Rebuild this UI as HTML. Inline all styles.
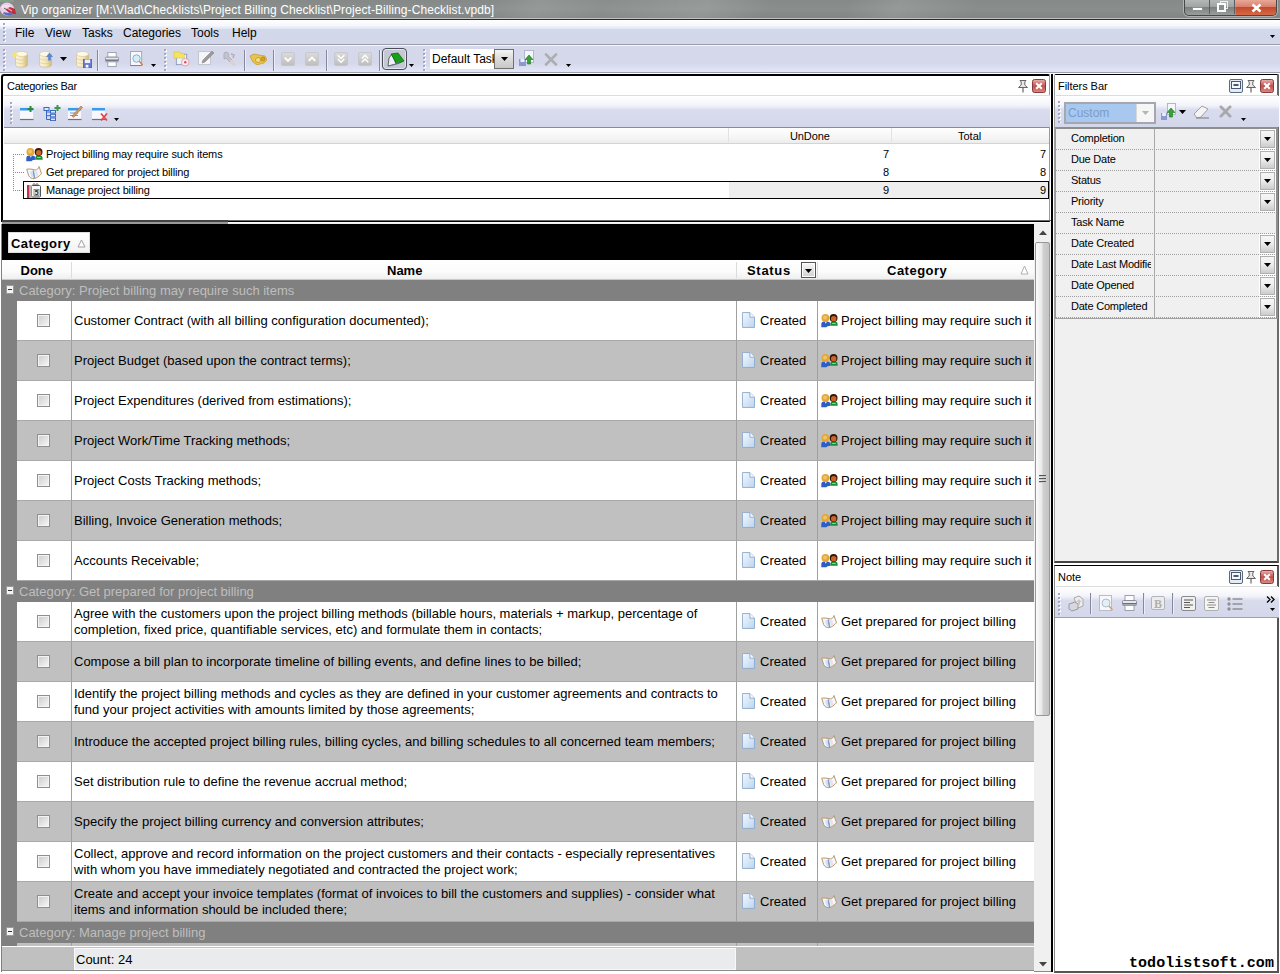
<!DOCTYPE html>
<html><head><meta charset="utf-8"><title>Vip organizer</title>
<style>
*{box-sizing:border-box;margin:0;padding:0}
html,body{width:1280px;height:974px;overflow:hidden;background:#fff}
body{font-family:"Liberation Sans",sans-serif;font-size:12px;color:#000;position:relative}
.a{position:absolute}
.t{position:absolute;white-space:nowrap;line-height:1}
b{font-weight:normal}
/* title */
#title{left:0;top:0;width:1280px;height:20px;background:linear-gradient(115deg,transparent 0,transparent 38%,rgba(255,255,255,.10) 42%,rgba(255,255,255,.03) 47%,rgba(255,255,255,.12) 55%,transparent 60%,transparent 66%,rgba(255,255,255,.10) 70%,transparent 76%) 0 0/1280px 18px no-repeat,linear-gradient(#858a88 0,#8a8f8d 9px,#818684 18px,#c0c2c1 18px,#c0c2c1 19px,#2a2c2b 19px)}
#title .t{color:#fff;font-size:12px;left:21px;top:4px;letter-spacing:.08px}
#wbtn{left:1184px;top:0;width:93px;height:16px;border:1px solid #454948;border-top:0;border-radius:0 0 5px 5px;background:linear-gradient(#b4b8b6,#a0a4a2 45%,#7c807e 50%,#9a9e9c);overflow:hidden;box-shadow:0 0 0 1px rgba(255,255,255,.35)}
#wclose{left:51px;top:0;width:41px;height:15px;background:linear-gradient(#e8a898,#d8806c 45%,#c44a2c 50%,#d46a48)}
.grip{position:absolute;width:3px;background:linear-gradient(#a4a8c0 0,#a4a8c0 2px,transparent 2px) 0 0/2px 4px repeat-y,linear-gradient(#fff 0,#fff 2px,transparent 2px) 1px 1px/2px 4px repeat-y}
.sep{position:absolute;top:4px;width:1px;height:21px;background:#858999;box-shadow:1px 0 0 #ecedf6}
/* menu */
#menu{left:0;top:20px;width:1280px;height:25px;background:linear-gradient(#fefeff 0,#f6f7fc 6px,#e8ecf8 7px,#e4e8f5 8.500px,#d2d9eb 9px,#d2d7ea 100%);border-bottom:1px solid #9a9cab}
#menu .t{font-size:12px;top:7px}
#tb{left:0;top:45px;width:1280px;height:29px;border-top:1px solid #f6f7fc;background:linear-gradient(#d5d9ea 0,#d4d8ea 60%,#e2e5f5 25px,#e2e5f5 26px,#9c9eac 26px,#9c9eac 27px,#fff 27px)}
/* categories bar */
#cat{left:1px;top:74px;width:1049px;height:148px;background:#fff;border:2px solid #000;border-right:1px solid #9a9a9a;border-radius:3px 2px 0 0}
.tbgrad{background:linear-gradient(#fff 0,#f3f4fa 30%,#d9dced 45%,#d3d7ea 100%)}
/* grid */
#gp{left:2px;top:224px;width:1032px;height:36px;background:#000}
#gh{left:2px;top:260px;width:1032px;height:20px;background:linear-gradient(#fff,#fbfbfb 60%,#efefef);border-bottom:1px solid #c9c9c9}
#gh .t{font-weight:bold;font-size:13px;top:4px}
.grp{left:2px;width:1032px;height:21px;background:#808080}
.grp .t{color:#bebebe;font-size:13px;left:17px;top:4px}
.grp i{position:absolute;left:4px;top:5px;width:8px;height:9px;background:#f4f4f4;border:1px solid #9a9a9a}
.grp i:after{content:"";position:absolute;left:1px;top:3px;width:4px;height:1px;background:#333}
.row{left:17px;width:1017px;height:40px;background:#fff;border-bottom:1px solid #a9a9a9}
.row.g{background:#c0c0c0}
.row .nm{position:absolute;left:57px;top:0;height:39px;width:660px;display:flex;align-items:center;font-size:13px;line-height:16px;white-space:nowrap}
.row .v1,.row .v2,.row .v3{position:absolute;top:0;width:1px;height:39px;background:#a0a0a0}
.row .v1{left:54px}.row .v2{left:719px}.row .v3{left:800px}
.row .cb{position:absolute;left:20px;top:13px;width:13px;height:13px;border:1px solid #8e8f8f;background:#f4f4f4}
.row .cb:after{content:"";position:absolute;left:1px;top:1px;right:1px;bottom:1px;background:linear-gradient(135deg,#cfcfcf,#f4f4f4)}
.row .st{position:absolute;left:743px;top:12px;font-size:13px;line-height:16px}
.row .ct{position:absolute;left:824px;top:12px;font-size:13px;line-height:16px;width:190px;overflow:hidden;white-space:nowrap}
.row svg.doc{position:absolute;left:725px;top:11px}
.row svg.ci{position:absolute;left:804px;top:12.500px}
#ind{left:1px;top:224px;width:16px;height:722px;background:#808080}
#ind:after{content:"";position:absolute;left:0;top:722px;width:1px;height:26px;background:#808080}
/* panel generic */
.ph{position:absolute;font-size:11px;white-space:nowrap;line-height:1}
.hline{position:absolute;height:1px;background:#d0d0d0}
/* cat tree */
#cat .th{position:absolute;left:1px;top:51px;width:1045px;height:17px;background:linear-gradient(#fff,#f4f4f4 70%,#ececec);border-bottom:1px solid #d4d4d4;border-top:1px solid #8c8c8c}
#cat .r{position:absolute;font-size:11px;white-space:nowrap;line-height:1;letter-spacing:-.15px}
#gp .cbox{position:absolute;left:6px;top:8px;width:82px;height:21px;background:linear-gradient(#fff,#f2f2f2);border:1px solid #ddd}
#gp .cbox .t{font-weight:bold;font-size:13px;left:2px;top:4px;letter-spacing:.4px}
#foot{left:2px;top:947px;width:1032px;height:24px;background:#c0c0c0;border-bottom:1px solid #8a8a8a}
#foot .lt{position:absolute;left:72px;top:1px;width:662px;height:22px;background:#e9ebec;border:1px solid #f8f8f8}
#foot .t{left:74px;top:6px;font-size:13px}
#sb{left:1034px;top:223px;width:17px;height:749px;background:#f0f0f0}
#sb .th{position:absolute;left:1px;top:19px;width:15px;height:474px;border:1px solid #989898;border-radius:2px;background:linear-gradient(90deg,#fbfbfb,#e9e9e9 45%,#cfcfcf 55%,#c4c4c4)}
#fp{left:1054px;top:74px;width:225px;height:489px;background:#f0f0f0;border:1px solid #a0a0a0;border-top:1px solid #000;border-right:2px solid #6a6a6a;border-bottom:2px solid #444;border-radius:2px 0 0 0}
#fp:before{content:"";position:absolute;left:0;top:0;width:222px;height:22px;background:#fff}
#fg{left:0;top:52px;width:223px;height:192px;border:2px solid #8e8e8e;border-left:1px solid #9a9a9a;border-right:2px solid #8e8e8e;border-bottom:1px solid #a0a0a0;background:#f0f0f0}
#fg .fl{position:absolute;left:0;width:95px;height:20px;padding-left:15px;font-size:11px;display:flex;align-items:center;overflow:hidden;white-space:nowrap;letter-spacing:-.22px}
#fg .dot{position:absolute;left:0;width:220px;height:1px;background:repeating-linear-gradient(90deg,#a0a0a0 0,#a0a0a0 1px,transparent 1px,transparent 2px)}
#fg .dd{position:absolute;left:203px;width:17px;height:20px;border:1px solid #fff;background:linear-gradient(#f8f8f8,#eee 45%,#c8c8c8);box-shadow:inset 0 0 0 1px #b0b0b0}
#np{left:1054px;top:565px;width:225px;height:408px;background:#fff;border-top:1px solid #000;border-left:1px solid #888;border-right:2px solid #555;border-bottom:2px solid #555}

</style></head><body>
<svg width="0" height="0" style="position:absolute"><defs>
<linearGradient id="gCyl" x1="0" x2="1"><stop offset="0" stop-color="#fbf5de"/><stop offset=".55" stop-color="#f3e6b8"/><stop offset="1" stop-color="#cfb677"/></linearGradient>
<linearGradient id="gBtn" x1="0" x2="0" y1="0" y2="1"><stop offset="0" stop-color="#dcdcdc"/><stop offset="1" stop-color="#bdbdbd"/></linearGradient>
<linearGradient id="gDoc" x1="0" x2="1" y1="0" y2="1"><stop offset="0" stop-color="#f4f9ff"/><stop offset="1" stop-color="#bcd4ee"/></linearGradient>
<linearGradient id="gClose" x1="0" x2="0" y1="0" y2="1"><stop offset="0" stop-color="#e8b4b0"/><stop offset=".5" stop-color="#c0504d"/><stop offset="1" stop-color="#d98a86"/></linearGradient>
<linearGradient id="gDD" x1="0" x2="0" y1="0" y2="1"><stop offset="0" stop-color="#f6f6f6"/><stop offset="1" stop-color="#c4c4c4"/></linearGradient>
<symbol id="i-doc" viewBox="0 0 14 17"><path d="M.5 .5h8l5 5v11h-13z" fill="url(#gDoc)" stroke="#8eaacc"/><path d="M8.500 .5v5h5" fill="#f7fbff" stroke="#8eaacc"/></symbol>
<symbol id="i-ppl" viewBox="0 0 17 14"><path d="M.3 13.300v-3.200c0-1.800 1.500-2.600 3-2.600h2.800c1.700 0 3.200.8 3.200 2.600v1.700l-2.800.4-1.200 1.100z" fill="#2d5ec6"/><path d="M3.600 7.500l1.200 2.300 1.200-2.300z" fill="#e8eefc"/><path d="M9.300 11.800v-2c0-1.600 1.400-2.300 2.700-2.300h1.600c1.500 0 3 .7 3 2.300v2z" fill="#1f8c3c"/><path d="M11.200 9.500h3.400" stroke="#8fd8a0" stroke-width="1"/><circle cx="4.400" cy="4" r="3.900" fill="#e2a63a"/><circle cx="4" cy="3.400" r="2" fill="#f0c462"/><circle cx="12.600" cy="4" r="3.900" fill="#33170a"/><circle cx="12.700" cy="4.700" r="2.700" fill="#cc6428"/></symbol>
<symbol id="i-book" viewBox="0 0 17 14"><path d="M.7 3.200l2 6.500c1 2 3 3 5.300 3 3-.7 5.500-2.700 7.500-5l-2.500-7.200c-.5 2-1.700 3.200-3.800 3.500c-3-.9-5.500-1.200-8.500-.8z" fill="#f4f7fc" stroke="#b9966c" stroke-width="1"/><path d="M7.200 4.500l1.300 7.700" stroke="#7f9cc8" stroke-width="1.600"/><path d="M4 5.500l1.500 5.500 2 .8-1-6.500z" fill="#cfe0f4"/><path d="M9 5l1 6.500 2.500-1.800-1.500-5z" fill="#e8e0ea"/></symbol>
<symbol id="i-clip" viewBox="0 0 14 15"><rect x="4.500" y="2.500" width="9" height="11.500" rx="1" fill="#fafafa" stroke="#555"/><rect x="0" y="2" width="2.600" height="13" fill="#c8304a"/><rect x="2.600" y="2" width="2" height="13" fill="#b9b9b9"/><path d="M6 2.500c0-2.500 2-2.500 2 0M9 2.500c0-2.500 2-2.500 2 0" fill="none" stroke="#444" stroke-width=".9"/><rect x="7" y="6.500" width="5" height="6" fill="#fff" stroke="#666" stroke-width=".7"/><text x="7.800" y="12" font-family="Liberation Sans" font-size="6.500" font-weight="bold" fill="#222">5</text></symbol>
<symbol id="i-close" viewBox="0 0 14 14"><rect x=".5" y=".5" width="13" height="13" rx="2" fill="url(#gClose)" stroke="#8c3a38"/><path d="M4.200 4.200l5.600 5.600M9.800 4.200l-5.600 5.600" stroke="#fff" stroke-width="2"/></symbol>
<symbol id="i-pin" viewBox="0 0 12 13"><path d="M3 .5h6l-1.200 1.500v3l2.700 2.500h-9l2.700-2.500v-3z" fill="#e8e8e8" stroke="#666" stroke-width="1"/><path d="M6 7.500v5" stroke="#666" stroke-width="1.200"/></symbol>
<symbol id="i-rest" viewBox="0 0 14 14"><rect x=".5" y=".5" width="13" height="13" rx="1.500" fill="#e4ecf6" stroke="#5a6a80"/><rect x="2.500" y="2.500" width="9" height="7" fill="#f4f8fc" stroke="#4a5870"/><rect x="4.500" y="5" width="5" height="2" fill="#4a5870"/></symbol>
<symbol id="i-cyl" viewBox="0 0 13 17"><path d="M.5 3v11c0 3 12 3 12 0v-11z" fill="url(#gCyl)" stroke="#cdb987" stroke-width=".6"/><ellipse cx="6.500" cy="3" rx="6" ry="2.500" fill="#fdf9e8" stroke="#d8c594" stroke-width=".6"/><path d="M.5 7c0 2.800 12 2.800 12 0M.5 10.500c0 2.800 12 2.800 12 0" fill="none" stroke="#dccb98" stroke-width=".7"/></symbol>
<symbol id="i-dn" viewBox="0 0 7 4"><path d="M0 0h7l-3.500 4z" fill="#000"/></symbol>
<symbol id="i-gbtn" viewBox="0 0 16 16"><rect x=".5" y=".5" width="15" height="15" rx="2" fill="url(#gBtn)" stroke="#c4c4c8"/></symbol>
</defs></svg>

<div id="title" class="a">
<span class="a" style="left:0;top:0;width:14px;height:2px;background:linear-gradient(90deg,#7aa888,#8a9a90)"></span><svg class="a" style="left:0;top:2px" width="17" height="15" viewBox="0 0 17 15"><ellipse cx="7" cy="7" rx="7" ry="6.500" fill="#e9cfe6"/><path d="M1 5c3-3 8-3 10 0l-6 3z" fill="#f3dff1"/><path d="M6 7l4-2 5 2 1 5-5 0-4-3z" fill="#c8283a"/><path d="M7 6l5 3" stroke="#f0b8b0" stroke-width="1.200"/><path d="M3 11.500c3 2.500 7 2.500 10 .5l-1-2c-3 1-6 1-8 0z" fill="#5f6cc4"/><path d="M4 6l3 2" stroke="#555" stroke-width="1"/></svg>
<div class="t">Vip organizer [M:\Vlad\Checklists\Project Billing Checklist\Project-Billing-Checklist.vpdb]</div>
<div id="wbtn" class="a">
<span class="a" style="left:0;top:0;width:25px;height:14px;border-right:1px solid #5a5e5c"><span class="a" style="left:7px;top:7px;width:11px;height:4px;background:#fff;border:1px solid #8a8e8c;border-radius:1px"></span></span>
<span class="a" style="left:26px;top:0;width:24px;height:14px;border-right:1px solid #5a5e5c"><span class="a" style="left:9px;top:1px;width:8px;height:8px;border:1px solid #fff;opacity:.8"></span><span class="a" style="left:6px;top:3px;width:9px;height:9px;border:2px solid #fff;background:#8a8e8c"></span></span>
<span class="a" id="wclose"><svg class="a" style="left:15px;top:3px" width="11" height="10" viewBox="0 0 11 10"><path d="M1.500 1.500l8 7M9.500 1.500l-8 7" stroke="#fff" stroke-width="2.600"/></svg></span>
</div>
</div>
<div id="menu" class="a">
<i class="grip" style="left:3px;top:3px;height:20px"></i>
<div class="t" style="left:15px">File</div>
<div class="t" style="left:45px">View</div>
<div class="t" style="left:82px">Tasks</div>
<div class="t" style="left:123px">Categories</div>
<div class="t" style="left:191px">Tools</div>
<div class="t" style="left:232px">Help</div>
<svg class="a" style="left:1270px;top:15px" width="5" height="3"><use href="#i-dn"/></svg>
</div>
<div id="tb" class="a">
<i class="grip" style="left:3px;top:3px;height:22px"></i>
<svg class="a" style="left:15px;top:5px" width="13" height="17"><use href="#i-cyl"/></svg>
<svg class="a" style="left:11px;top:5px" width="8" height="8" viewBox="0 0 8 8"><path d="M4 0l1 3 3 1-3 1-1 3-1-3-3-1 3-1z" fill="#f8e860"/></svg>
<svg class="a" style="left:39px;top:5px" width="13" height="17"><use href="#i-cyl"/></svg>
<svg class="a" style="left:46px;top:6px" width="7" height="9" viewBox="0 0 8 9"><path d="M4 0l4 5h-2.500v4h-3v-4h-2.500z" fill="#5a86d4"/></svg>
<svg class="a" style="left:60px;top:11px" width="7" height="4"><use href="#i-dn"/></svg>
<svg class="a" style="left:76px;top:5px" width="13" height="17"><use href="#i-cyl"/></svg>
<svg class="a" style="left:83px;top:13px" width="9" height="9" viewBox="0 0 10 10"><rect x=".5" y=".5" width="9" height="9" fill="#6a78c8" stroke="#5a66b0"/><rect x="2" y=".5" width="6" height="4" fill="#eef"/><rect x="3" y="6.500" width="3" height="3" fill="#fff"/></svg>
<b class="sep" style="left:97px"></b>
<svg class="a" style="left:105px;top:6px" width="14" height="15" viewBox="0 0 15 16"><rect x="3" y=".5" width="9" height="5" fill="#fff" stroke="#9aa0b0"/><rect x=".5" y="5.500" width="14" height="5" rx="1" fill="#e8e8ec" stroke="#8a8e9c"/><rect x="1" y="8" width="13" height="1.500" fill="#6a6e7c"/><rect x="3" y="10.500" width="9" height="5" fill="#fff" stroke="#9aa0b0"/></svg>
<svg class="a" style="left:130px;top:5px" width="14" height="16" viewBox="0 0 15 17"><rect x=".5" y=".5" width="12" height="15" fill="#f8f8fc" stroke="#a0a4b4"/><circle cx="7" cy="8" r="4" fill="#d4ecf6" stroke="#7ab0d0"/><path d="M10 11l3.500 4" stroke="#d08050" stroke-width="1.600"/><path d="M.5 15.500h12" stroke="#7a8090"/></svg>
<svg class="a" style="left:151px;top:18px" width="5" height="3"><use href="#i-dn"/></svg>
<i class="grip" style="left:164px;top:3px;height:22px"></i>
<svg class="a" style="left:173px;top:5px" width="17" height="16" viewBox="0 0 18 17"><rect x="3.500" y="3.500" width="11" height="11" fill="#eef2fa" stroke="#8a9ac0"/><path d="M1 1h6l1 1.500h4v5h-11z" fill="#f6e45a" stroke="#d8c040" stroke-width=".6"/><circle cx="13" cy="12" r="4" fill="#fbeef0" stroke="#e0a0a8"/><circle cx="13" cy="12" r="1.300" fill="#d05060"/></svg>
<svg class="a" style="left:198px;top:4px" width="17" height="16" viewBox="0 0 17 16"><rect x=".5" y="1.500" width="12" height="13" fill="#f6f6f8" stroke="#c4c6d0"/><path d="M4 13l1-3 9-9 2 2-9 9z" fill="#9a9a9e" stroke="#88888c" stroke-width=".6"/></svg>
<svg class="a" style="left:222px;top:5px" width="16" height="16" viewBox="0 0 16 16"><path d="M2 2l3-1 2 2-1 2 6 6 1 3-3-1-6-6-2 1z" fill="#c4c4cc" stroke="#a8a8b4" stroke-width=".8"/><path d="M9 3l3 1-1 3" fill="none" stroke="#b0b0bc" stroke-width="1.500"/><rect x="8" y="9" width="6" height="6" rx="1" fill="#e0d8dc" opacity=".8"/></svg>
<b class="sep" style="left:244px"></b>
<svg class="a" style="left:249px;top:7px" width="18" height="12" viewBox="0 0 18 12"><path d="M1 3l4-2 5 1 6 1 2 4-3 3-4 1-3 1-4-3z" fill="#e8c44a" stroke="#c49a28" stroke-width=".7"/><circle cx="9" cy="7" r="2.500" fill="#f6e08a" stroke="#b88c20" stroke-width=".7"/><circle cx="14" cy="6" r="2" fill="#d4a830" stroke="#a87c18" stroke-width=".7"/></svg>
<b class="sep" style="left:273px"></b>
<svg class="a" style="left:281px;top:6px" width="14" height="14"><use href="#i-gbtn"/></svg>
<svg class="a" style="left:281px;top:6px" width="14" height="14" viewBox="0 0 15 15"><path d="M4 6l3.500 3.500 3.500-3.500" fill="none" stroke="#fff" stroke-width="2"/></svg>
<svg class="a" style="left:305px;top:6px" width="14" height="14"><use href="#i-gbtn"/></svg>
<svg class="a" style="left:305px;top:6px" width="14" height="14" viewBox="0 0 15 15"><path d="M4 9.500l3.500-3.500 3.500 3.500" fill="none" stroke="#fff" stroke-width="2"/></svg>
<b class="sep" style="left:326px"></b>
<svg class="a" style="left:334px;top:6px" width="14" height="14"><use href="#i-gbtn"/></svg>
<svg class="a" style="left:334px;top:6px" width="14" height="14" viewBox="0 0 15 15"><path d="M4 3.500l3.500 3.500 3.500-3.500M4 7.500l3.500 3.500 3.500-3.500" fill="none" stroke="#fff" stroke-width="1.600"/></svg>
<svg class="a" style="left:358px;top:6px" width="14" height="14"><use href="#i-gbtn"/></svg>
<svg class="a" style="left:358px;top:6px" width="14" height="14" viewBox="0 0 15 15"><path d="M4 7l3.500-3.500 3.500 3.500M4 11l3.500-3.500 3.500 3.500" fill="none" stroke="#fff" stroke-width="1.600"/></svg>
<b class="sep" style="left:379px"></b>
<span class="a" style="left:382px;top:2px;width:25px;height:22px;border:1px solid #4a4e5c;border-radius:4px;background:#c6c8d6;box-shadow:inset 0 0 0 1px #e4e6f0"></span>
<svg class="a" style="left:386px;top:6px" width="19" height="16" viewBox="0 0 19 16"><path d="M2 14l1-8 3-4 4 10z" fill="#eef" stroke="#3a4a3a" stroke-width=".8"/><path d="M5 2l7-1 6 8-7 3z" fill="#18a018" stroke="#0a6a0a" stroke-width=".8"/><path d="M3 14l8-2 2-2" fill="none" stroke="#6a7aa0" stroke-width=".8"/></svg>
<svg class="a" style="left:409px;top:18px" width="5" height="3"><use href="#i-dn"/></svg>
<i class="grip" style="left:423px;top:3px;height:22px"></i>
<span class="a" style="left:430px;top:3px;width:64px;height:20px;background:#fff;overflow:hidden"><span class="t" style="left:2px;top:4px;font-size:12px">Default Task</span></span>
<span class="a" style="left:494px;top:3px;width:20px;height:20px;border:1px solid #707070;background:linear-gradient(#f4f4f4,#ddd 45%,#c8c8c8)"><svg class="a" style="left:6px;top:7px" width="7" height="4"><use href="#i-dn"/></svg></span>
<svg class="a" style="left:518px;top:4px" width="18" height="18" viewBox="0 0 18 18"><rect x="6.500" y=".5" width="9" height="12" fill="#f4f6fc" stroke="#b0b8d0"/><path d="M1 9h7v7h-7z" fill="#8a9ad0"/><rect x="2.500" y="9" width="4" height="3" fill="#eef"/><path d="M11 5l4 4.500h-2.500v4.500h-3v-4.500h-2.500z" fill="#3aa03a" stroke="#1a7a1a" stroke-width=".6"/></svg>
<svg class="a" style="left:544px;top:7px" width="14" height="13" viewBox="0 0 14 13"><path d="M2 1.500l10 10M12 1.500l-10 10" stroke="#aeaeb2" stroke-width="2.600" stroke-linecap="round"/></svg>
<svg class="a" style="left:566px;top:18px" width="5" height="3"><use href="#i-dn"/></svg>
</div>

<div id="ind" class="a"></div>
<div id="cat" class="a">
<div class="ph" style="left:4px;top:5px;letter-spacing:-.25px">Categories Bar</div>
<svg class="a" style="left:1014px;top:4px" width="12" height="13"><use href="#i-pin"/></svg>
<svg class="a" style="left:1029px;top:3px" width="14" height="14"><use href="#i-close"/></svg>
<div class="hline" style="left:1px;top:19px;width:1046px;background:#dcdcdc"></div>
<div class="a tbgrad" style="left:1px;top:20px;width:1046px;height:31px">
<i class="grip" style="left:6px;top:6px;height:22px"></i>
<svg class="a" style="left:15px;top:9px" width="16" height="16" viewBox="0 0 16 16"><rect x="1" y="3" width="13" height="11" fill="#f8f8fc"/><rect x="1" y="3" width="13" height="2.500" fill="#3a9aea"/><path d="M1 14.500h13.500" stroke="#6a7080" stroke-width="1.200"/><path d="M11.500 1v6M8.500 4h6" stroke="#2a8a3a" stroke-width="2"/></svg>
<svg class="a" style="left:39px;top:9px" width="18" height="16" viewBox="0 0 18 16"><path d="M3.500 5v9.500h4M3.500 7h4M3.500 10.700h4" fill="none" stroke="#3a6ac0"/><rect x="1" y="2.500" width="5" height="3" fill="#dce8fa" stroke="#3a6ac0"/><rect x="7.500" y="5.500" width="5" height="2.600" fill="#dce8fa" stroke="#3a6ac0"/><rect x="7.500" y="9.300" width="5" height="2.600" fill="#dce8fa" stroke="#3a6ac0"/><rect x="7.500" y="13" width="5" height="2.600" fill="#dce8fa" stroke="#3a6ac0"/><path d="M14.500 0v6M11.500 3h6" stroke="#3a9a4a" stroke-width="2"/></svg>
<svg class="a" style="left:63px;top:8px" width="17" height="17" viewBox="0 0 17 17"><rect x="1" y="4" width="13" height="11" fill="#f8f8fc"/><rect x="1" y="4" width="13" height="2.500" fill="#3a9aea"/><path d="M1 15.500h13.500" stroke="#6a7080" stroke-width="1.200"/><path d="M3 9h8M3 11.500h8" stroke="#5a8ad0" stroke-width=".9"/><path d="M5 12l9-10 1.500 1.500-9 10z" fill="#d89a5a" stroke="#a86a3a" stroke-width=".6"/></svg>
<svg class="a" style="left:87px;top:9px" width="18" height="17" viewBox="0 0 18 17"><rect x="1" y="3" width="13" height="11" fill="#f8f8fc"/><rect x="1" y="3" width="13" height="2.500" fill="#3a9aea"/><path d="M1 14.500h13.500" stroke="#6a7080" stroke-width="1.200"/><path d="M10 8.500l6 7M16 8.500l-6 7" stroke="#e0484a" stroke-width="1.800"/></svg>
<svg class="a" style="left:110px;top:22px" width="5" height="3"><use href="#i-dn"/></svg>
</div>
<div class="th"><b class="a" style="left:724px;top:0;width:1px;height:14px;background:#e2e2e2"></b><b class="a" style="left:887px;top:0;width:1px;height:14px;background:#e2e2e2"></b>
<span class="ph" style="left:786px;top:3px;letter-spacing:-.1px">UnDone</span><span class="ph" style="left:954px;top:3px">Total</span></div>
<!-- tree lines -->
<b class="a" style="left:10px;top:78px;width:1px;height:37px;background:repeating-linear-gradient(#8a8a8a 0,#8a8a8a 1px,transparent 1px,transparent 2px)"></b>
<b class="a" style="left:10px;top:78px;width:11px;height:1px;background:repeating-linear-gradient(90deg,#8a8a8a 0,#8a8a8a 1px,transparent 1px,transparent 2px)"></b>
<b class="a" style="left:10px;top:96px;width:11px;height:1px;background:repeating-linear-gradient(90deg,#8a8a8a 0,#8a8a8a 1px,transparent 1px,transparent 2px)"></b>
<b class="a" style="left:10px;top:114px;width:11px;height:1px;background:repeating-linear-gradient(90deg,#8a8a8a 0,#8a8a8a 1px,transparent 1px,transparent 2px)"></b>
<svg class="a" style="left:23px;top:72px" width="17" height="14"><use href="#i-ppl"/></svg>
<span class="r" style="left:43px;top:73px">Project billing may require such items</span>
<svg class="a" style="left:23px;top:89.500px" width="17" height="14"><use href="#i-book"/></svg>
<span class="r" style="left:43px;top:91px">Get prepared for project billing</span>
<div class="a" style="left:20px;top:105px;width:1026px;height:18px;border:1px solid #000"><b class="a" style="left:705px;top:0;width:319px;height:16px;background:#eee"></b></div>
<svg class="a" style="left:24px;top:106.500px" width="14" height="15"><use href="#i-clip"/></svg>
<span class="r" style="left:43px;top:109px">Manage project billing</span>
<span class="r" style="right:160px;top:73px">7</span><span class="r" style="right:3px;top:73px">7</span>
<span class="r" style="right:160px;top:91px">8</span><span class="r" style="right:3px;top:91px">8</span>
<span class="r" style="right:160px;top:109px">9</span><span class="r" style="right:3px;top:109px">9</span>
</div>
<div class="a" style="left:2px;top:220px;width:226px;height:2px;background:#444"></div><div class="a" style="left:2px;top:222px;width:226px;height:2px;background:#9a9a9a"></div><div class="a" style="left:228px;top:220px;width:823px;height:1px;background:#6a6a6a"></div><div class="a" style="left:228px;top:222px;width:823px;height:2px;background:linear-gradient(#fff,#e8e8e8)"></div>
<div id="gp" class="a"><div class="cbox"><div class="t">Category</div><svg class="a" style="left:68px;top:6px" width="9" height="9" viewBox="0 0 9 9"><path d="M4.500 1l3.500 7h-7z" fill="#fff" stroke="#a0a0a0"/></svg></div></div>
<div id="gh" class="a">
<b class="a" style="left:69px;top:2px;width:1px;height:16px;background:#dcdcdc"></b>
<b class="a" style="left:734px;top:2px;width:1px;height:16px;background:#dcdcdc"></b>
<b class="a" style="left:815px;top:2px;width:1px;height:16px;background:#dcdcdc"></b>
<div class="t" style="left:18.500px">Done</div>
<div class="t" style="left:385px">Name</div>
<div class="t" style="left:745px;letter-spacing:.7px">Status</div>
<span class="a" style="left:799px;top:2px;width:15px;height:16px;border:1px solid #555;background:linear-gradient(#f8f8f8,#d0d0d0);box-shadow:inset 0 0 0 1px #fff"><svg class="a" style="left:3px;top:6px" width="7" height="4"><use href="#i-dn"/></svg></span>
<div class="t" style="left:885px;letter-spacing:.5px">Category</div>
<svg class="a" style="left:1018px;top:5px" width="9" height="10" viewBox="0 0 9 10"><path d="M4.500 1l3.500 8h-7z" fill="#fff" stroke="#b0b0b0"/></svg>
</div>
<div id="foot" class="a"><div class="lt"></div><div class="t">Count: 24</div></div>
<div id="sb" class="a"><svg class="a" style="left:5px;top:7px" width="8" height="5" viewBox="0 0 8 5"><path d="M0 5l4-4.500 4 4.500z" fill="#444"/></svg><div class="th"></div>
<b class="a" style="left:5px;top:252px;width:7px;height:1px;background:#555;box-shadow:0 3px 0 #555,0 6px 0 #555,0 1px 0 #ccc,0 4px 0 #ccc,0 7px 0 #ccc"></b>
<svg class="a" style="left:5px;top:739px" width="8" height="5" viewBox="0 0 8 5"><path d="M0 0h8l-4 4.500z" fill="#444"/></svg></div>
<div class="a" style="left:1034px;top:971px;width:17px;height:1px;background:#8a8a8a"></div>
<div class="a" style="left:1051px;top:74px;width:2px;height:898px;background:#000"></div>

<div class="a grp" style="top:280px"><i></i><div class="t">Category: Project billing may require such items</div></div>
<div class="a row" style="top:301px"><b class="v1"></b><b class="v2"></b><b class="v3"></b><span class="cb"></span><div class="nm"><span>Customer Contract (with all billing configuration documented);</span></div><svg class="doc" width="13" height="16"><use href="#i-doc"/></svg><span class="st">Created</span><svg class="ci" width="17" height="14"><use href="#i-ppl"/></svg><span class="ct">Project billing may require such items</span></div>
<div class="a row g" style="top:341px"><b class="v1"></b><b class="v2"></b><b class="v3"></b><span class="cb"></span><div class="nm"><span>Project Budget (based upon the contract terms);</span></div><svg class="doc" width="13" height="16"><use href="#i-doc"/></svg><span class="st">Created</span><svg class="ci" width="17" height="14"><use href="#i-ppl"/></svg><span class="ct">Project billing may require such items</span></div>
<div class="a row" style="top:381px"><b class="v1"></b><b class="v2"></b><b class="v3"></b><span class="cb"></span><div class="nm"><span>Project Expenditures (derived from estimations);</span></div><svg class="doc" width="13" height="16"><use href="#i-doc"/></svg><span class="st">Created</span><svg class="ci" width="17" height="14"><use href="#i-ppl"/></svg><span class="ct">Project billing may require such items</span></div>
<div class="a row g" style="top:421px"><b class="v1"></b><b class="v2"></b><b class="v3"></b><span class="cb"></span><div class="nm"><span>Project Work/Time Tracking methods;</span></div><svg class="doc" width="13" height="16"><use href="#i-doc"/></svg><span class="st">Created</span><svg class="ci" width="17" height="14"><use href="#i-ppl"/></svg><span class="ct">Project billing may require such items</span></div>
<div class="a row" style="top:461px"><b class="v1"></b><b class="v2"></b><b class="v3"></b><span class="cb"></span><div class="nm"><span>Project Costs Tracking methods;</span></div><svg class="doc" width="13" height="16"><use href="#i-doc"/></svg><span class="st">Created</span><svg class="ci" width="17" height="14"><use href="#i-ppl"/></svg><span class="ct">Project billing may require such items</span></div>
<div class="a row g" style="top:501px"><b class="v1"></b><b class="v2"></b><b class="v3"></b><span class="cb"></span><div class="nm"><span>Billing, Invoice Generation methods;</span></div><svg class="doc" width="13" height="16"><use href="#i-doc"/></svg><span class="st">Created</span><svg class="ci" width="17" height="14"><use href="#i-ppl"/></svg><span class="ct">Project billing may require such items</span></div>
<div class="a row" style="top:541px"><b class="v1"></b><b class="v2"></b><b class="v3"></b><span class="cb"></span><div class="nm"><span>Accounts Receivable;</span></div><svg class="doc" width="13" height="16"><use href="#i-doc"/></svg><span class="st">Created</span><svg class="ci" width="17" height="14"><use href="#i-ppl"/></svg><span class="ct">Project billing may require such items</span></div>
<div class="a grp" style="top:581px"><i></i><div class="t">Category: Get prepared for project billing</div></div>
<div class="a row" style="top:602px"><b class="v1"></b><b class="v2"></b><b class="v3"></b><span class="cb"></span><div class="nm"><span>Agree with the customers upon the project billing methods (billable hours, materials + markup, percentage of<br>completion, fixed price, quantifiable services, etc) and formulate them in contacts;</span></div><svg class="doc" width="13" height="16"><use href="#i-doc"/></svg><span class="st">Created</span><svg class="ci" width="17" height="14"><use href="#i-book"/></svg><span class="ct">Get prepared for project billing</span></div>
<div class="a row g" style="top:642px"><b class="v1"></b><b class="v2"></b><b class="v3"></b><span class="cb"></span><div class="nm"><span>Compose a bill plan to incorporate timeline of billing events, and define lines to be billed;</span></div><svg class="doc" width="13" height="16"><use href="#i-doc"/></svg><span class="st">Created</span><svg class="ci" width="17" height="14"><use href="#i-book"/></svg><span class="ct">Get prepared for project billing</span></div>
<div class="a row" style="top:682px"><b class="v1"></b><b class="v2"></b><b class="v3"></b><span class="cb"></span><div class="nm"><span>Identify the project billing methods and cycles as they are defined in your customer agreements and contracts to<br>fund your project activities with amounts limited by those agreements;</span></div><svg class="doc" width="13" height="16"><use href="#i-doc"/></svg><span class="st">Created</span><svg class="ci" width="17" height="14"><use href="#i-book"/></svg><span class="ct">Get prepared for project billing</span></div>
<div class="a row g" style="top:722px"><b class="v1"></b><b class="v2"></b><b class="v3"></b><span class="cb"></span><div class="nm"><span>Introduce the accepted project billing rules, billing cycles, and billing schedules to all concerned team members;</span></div><svg class="doc" width="13" height="16"><use href="#i-doc"/></svg><span class="st">Created</span><svg class="ci" width="17" height="14"><use href="#i-book"/></svg><span class="ct">Get prepared for project billing</span></div>
<div class="a row" style="top:762px"><b class="v1"></b><b class="v2"></b><b class="v3"></b><span class="cb"></span><div class="nm"><span>Set distribution rule to define the revenue accrual method;</span></div><svg class="doc" width="13" height="16"><use href="#i-doc"/></svg><span class="st">Created</span><svg class="ci" width="17" height="14"><use href="#i-book"/></svg><span class="ct">Get prepared for project billing</span></div>
<div class="a row g" style="top:802px"><b class="v1"></b><b class="v2"></b><b class="v3"></b><span class="cb"></span><div class="nm"><span>Specify the project billing currency and conversion attributes;</span></div><svg class="doc" width="13" height="16"><use href="#i-doc"/></svg><span class="st">Created</span><svg class="ci" width="17" height="14"><use href="#i-book"/></svg><span class="ct">Get prepared for project billing</span></div>
<div class="a row" style="top:842px"><b class="v1"></b><b class="v2"></b><b class="v3"></b><span class="cb"></span><div class="nm"><span>Collect, approve and record information on the project customers and their contacts - especially representatives<br>with whom you have immediately negotiated and contracted the project work;</span></div><svg class="doc" width="13" height="16"><use href="#i-doc"/></svg><span class="st">Created</span><svg class="ci" width="17" height="14"><use href="#i-book"/></svg><span class="ct">Get prepared for project billing</span></div>
<div class="a row g" style="top:882px"><b class="v1"></b><b class="v2"></b><b class="v3"></b><span class="cb"></span><div class="nm"><span>Create and accept your invoice templates (format of invoices to bill the customers and supplies) - consider what<br>items and information should be included there;</span></div><svg class="doc" width="13" height="16"><use href="#i-doc"/></svg><span class="st">Created</span><svg class="ci" width="17" height="14"><use href="#i-book"/></svg><span class="ct">Get prepared for project billing</span></div>
<div class="a grp" style="top:922px"><i></i><div class="t">Category: Manage project billing</div></div>
<div class="a row g prow" style="top:943px;height:3px;border:0;overflow:hidden"><b class="v1"></b><b class="v2"></b><b class="v3"></b></div>
<div id="fp" class="a">
<div class="ph" style="left:3px;top:6px;letter-spacing:-.05px">Filters Bar</div>
<svg class="a" style="left:174px;top:4px" width="14" height="14"><use href="#i-rest"/></svg>
<svg class="a" style="left:190px;top:5px" width="12" height="13"><use href="#i-pin"/></svg>
<svg class="a" style="left:205px;top:4px" width="14" height="14"><use href="#i-close"/></svg>
<div class="hline" style="left:1px;top:20px;width:222px;background:#dcdcdc"></div>
<div class="a tbgrad" style="left:0;top:21px;width:224px;height:31px">
<i class="grip" style="left:3px;top:5px;height:22px"></i>
<span class="a" style="left:9px;top:6px;width:92px;height:22px;border:2px solid #a4a6b0;background:#fff"><span class="a" style="left:0;top:0;width:70px;height:18px;background:#a8c8f0"></span><span class="t" style="left:2px;top:3px;font-size:12px;color:#7a9cc8">Custom</span><span class="a" style="left:70px;top:0;width:18px;height:18px;background:#f6f6f6;border-left:1px solid #d8d8d8"><svg class="a" style="left:5px;top:7px" width="7" height="4" viewBox="0 0 7 4"><path d="M0 0h7l-3.500 4z" fill="#b4b4b4"/></svg></span></span>
<svg class="a" style="left:105px;top:7px" width="18" height="18" viewBox="0 0 18 18"><rect x="7.500" y=".5" width="8" height="11" fill="#f4f6fc" stroke="#b0b8d0"/><path d="M1 10h6v7h-6z" fill="#8a9ad0"/><rect x="2.200" y="10" width="3.600" height="3" fill="#eef"/><path d="M11 5l4 4.500h-2.500v4.500h-3v-4.500h-2.500z" fill="#3aa03a" stroke="#1a7a1a" stroke-width=".6"/></svg>
<svg class="a" style="left:124px;top:14px" width="7" height="4"><use href="#i-dn"/></svg>
<svg class="a" style="left:138px;top:9px" width="18" height="14" viewBox="0 0 18 14"><path d="M1 9l8-8 6 3-7 8-4 1z" fill="#f4f4f4" stroke="#a0a0a4"/><path d="M3 13h13" stroke="#8a8a8e" stroke-width="1.200"/></svg>
<svg class="a" style="left:164px;top:9px" width="13" height="13" viewBox="0 0 14 13"><path d="M2 1.500l10 10M12 1.500l-10 10" stroke="#a8a8ac" stroke-width="3" stroke-linecap="round"/></svg>
<svg class="a" style="left:186px;top:22px" width="5" height="3"><use href="#i-dn"/></svg>
</div>
<div id="fg" class="a">
<span class="fl" style="top:-1px"><span>Completion</span></span><span class="dd" style="top:0px"><svg class="a" style="left:4px;top:7px" width="7" height="4"><use href="#i-dn"/></svg></span><b class="dot" style="top:20px"></b>
<span class="fl" style="top:20px"><span>Due Date</span></span><span class="dd" style="top:21px"><svg class="a" style="left:4px;top:7px" width="7" height="4"><use href="#i-dn"/></svg></span><b class="dot" style="top:41px"></b>
<span class="fl" style="top:41px"><span>Status</span></span><span class="dd" style="top:42px"><svg class="a" style="left:4px;top:7px" width="7" height="4"><use href="#i-dn"/></svg></span><b class="dot" style="top:62px"></b>
<span class="fl" style="top:62px"><span>Priority</span></span><span class="dd" style="top:63px"><svg class="a" style="left:4px;top:7px" width="7" height="4"><use href="#i-dn"/></svg></span><b class="dot" style="top:83px"></b>
<span class="fl" style="top:83px"><span>Task Name</span></span><b class="dot" style="top:104px"></b>
<span class="fl" style="top:104px"><span>Date Created</span></span><span class="dd" style="top:105px"><svg class="a" style="left:4px;top:7px" width="7" height="4"><use href="#i-dn"/></svg></span><b class="dot" style="top:125px"></b>
<span class="fl" style="top:125px"><span>Date Last Modified</span></span><span class="dd" style="top:126px"><svg class="a" style="left:4px;top:7px" width="7" height="4"><use href="#i-dn"/></svg></span><b class="dot" style="top:146px"></b>
<span class="fl" style="top:146px"><span>Date Opened</span></span><span class="dd" style="top:147px"><svg class="a" style="left:4px;top:7px" width="7" height="4"><use href="#i-dn"/></svg></span><b class="dot" style="top:167px"></b>
<span class="fl" style="top:167px"><span>Date Completed</span></span><span class="dd" style="top:168px"><svg class="a" style="left:4px;top:7px" width="7" height="4"><use href="#i-dn"/></svg></span><b class="dot" style="top:188px"></b>
<b class="a" style="left:98px;top:0;width:1px;height:188px;background:#a8a8a8"></b>
</div></div>
<div id="np" class="a">
<div class="ph" style="left:3px;top:6px;">Note</div>
<svg class="a" style="left:174px;top:4px" width="14" height="14"><use href="#i-rest"/></svg>
<svg class="a" style="left:190px;top:5px" width="12" height="13"><use href="#i-pin"/></svg>
<svg class="a" style="left:205px;top:4px" width="14" height="14"><use href="#i-close"/></svg>
<div class="hline" style="left:1px;top:20px;width:222px;background:#dcdcdc"></div>
<div class="a tbgrad" style="left:0;top:21px;width:224px;height:31px;border-bottom:1px solid #a0a0a8">
<i class="grip" style="left:3px;top:6px;height:22px"></i>
<svg class="a" style="left:13px;top:8px" width="17" height="17" viewBox="0 0 17 17"><path d="M6 3l5-2 4 3v7l-5 2z" fill="#eee" stroke="#a8a8ac"/><path d="M1 9l6-2 3 2v5l-6 2-3-2z" fill="#d8d8dc" stroke="#9a9aa0"/><path d="M11 4l3 3h-2v3h-2v-3h-2z" fill="#c8c8cc"/></svg>
<b class="sep" style="left:35px;top:6px"></b>
<svg class="a" style="left:44px;top:8px" width="15" height="17" viewBox="0 0 15 17"><rect x=".5" y=".5" width="12" height="15" fill="#f8f8fc" stroke="#b8bcc8"/><circle cx="7" cy="8" r="4" fill="#e4eef4" stroke="#a8c0d0"/><path d="M10 11l3.500 4" stroke="#d8a070" stroke-width="1.600"/></svg>
<svg class="a" style="left:67px;top:8px" width="15" height="16" viewBox="0 0 15 16"><rect x="3" y=".5" width="9" height="5" fill="#fff" stroke="#9aa0b0"/><rect x=".5" y="5.500" width="14" height="5" rx="1" fill="#e8e8ec" stroke="#8a8e9c"/><rect x="1" y="8" width="13" height="1.500" fill="#6a6e7c"/><rect x="3" y="10.500" width="9" height="5" fill="#fff" stroke="#9aa0b0"/></svg>
<b class="sep" style="left:88px;top:6px"></b>
<span class="a" style="left:96px;top:9px;width:14px;height:14px;border:1px solid #b4b4b8;border-radius:2px;background:#ececf0"><span class="t" style="left:2px;top:1px;font-family:'Liberation Serif',serif;font-weight:bold;font-size:12px;color:#b0b0a8">B</span></span>
<b class="sep" style="left:117px;top:6px"></b>
<svg class="a" style="left:126px;top:9px" width="15" height="15" viewBox="0 0 15 15"><rect x=".5" y=".5" width="14" height="14" rx="1.500" fill="#f0f0f0" stroke="#8a8a8a"/><path d="M3 4h9M3 6.500h6M3 9h9M3 11.500h6" stroke="#555" stroke-width="1"/></svg>
<svg class="a" style="left:149px;top:9px" width="15" height="15" viewBox="0 0 15 15"><rect x=".5" y=".5" width="14" height="14" rx="1.500" fill="#f4f4f4" stroke="#b0b0b0"/><path d="M3 4h9M4.500 6.500h6M3 9h9M4.500 11.500h6" stroke="#8a8a8a" stroke-width="1"/></svg>
<svg class="a" style="left:172px;top:10px" width="16" height="14" viewBox="0 0 16 14"><circle cx="2" cy="2" r="1.700" fill="#909094"/><circle cx="2" cy="7" r="1.700" fill="#909094"/><circle cx="2" cy="12" r="1.700" fill="#909094"/><path d="M5.500 2h10M5.500 7h10M5.500 12h10" stroke="#909094" stroke-width="1.600"/></svg>
<svg class="a" style="left:211px;top:9px" width="9" height="7" viewBox="0 0 9 7"><path d="M1 .5l3 3-3 3M5 .5l3 3-3 3" fill="none" stroke="#000" stroke-width="1.300"/></svg>
<svg class="a" style="left:215px;top:21px" width="5" height="3"><use href="#i-dn"/></svg>
</div>
<div class="t" style="left:74px;top:390px;font-family:'Liberation Mono',monospace;font-weight:bold;font-size:15px;letter-spacing:.06px">todolistsoft.com</div>
</div>
</body></html>
